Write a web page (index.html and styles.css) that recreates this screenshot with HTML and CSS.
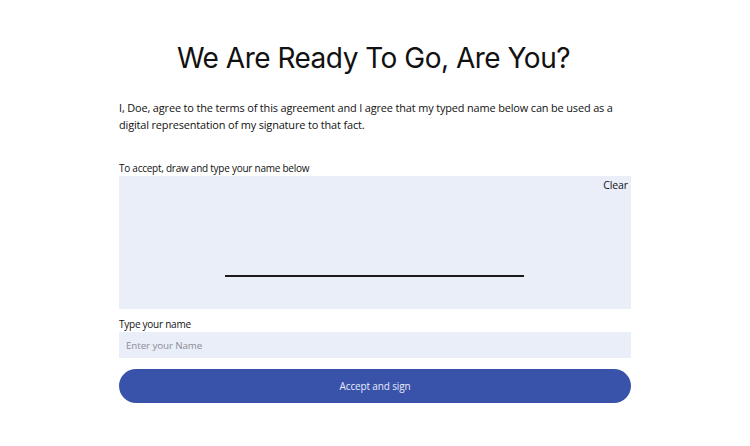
FILE: index.html
```html
<!DOCTYPE html>
<html>
<head>
<meta charset="utf-8">
<link rel="stylesheet" href="styles.css">
</head>
<body>
<main class="wrap">
  <h1 class="title">We Are Ready To Go, Are You?</h1>
  <p class="lead">I, Doe, agree to the terms of this agreement and I agree that my typed name below can be used as a digital representation of my signature to that fact.</p>
  <div class="field sig-field">
    <label class="label">To accept, draw and type your name below</label>
    <div class="sig-pad">
      <div class="clear-row"><span class="clear">Clear</span></div>
      <div class="sig-line"></div>
    </div>
  </div>
  <div class="field name-field">
    <label class="label">Type your name</label>
    <input class="name-input" type="text" placeholder="Enter your Name">
  </div>
  <button class="submit">Accept and sign</button>
</main>
</body>
</html>
```
FILE: styles.css
```css
* { box-sizing: border-box; }
html, body { margin: 0; padding: 0; background: #fff; }
body { font-family: "Open Sans", sans-serif; color: #111; }
.wrap {
  width: 512px;
  margin: 0 auto;
  padding-top: 38px;
  display: flex;
  flex-direction: column;
}
.title {
  margin: 0 0 0 -3px;
  font-family: Inter, "Liberation Sans", sans-serif;
  font-weight: 400;
  font-size: 28px;
  line-height: 40px;
  text-align: center;
  letter-spacing: -0.5px;
  color: #111;
}
.lead {
  margin: 21px 0 0;
  font-size: 10.95px;
  line-height: 17px;
  letter-spacing: -0.15px;
  color: #111;
}
.sig-field { margin-top: 28px; }
.label {
  display: block;
  font-size: 10px;
  line-height: 14px;
  letter-spacing: -0.25px;
  color: #111;
  margin-bottom: 1px;
}
.sig-pad {
  height: 133px;
  background: #eaeef8;
  display: flex;
  flex-direction: column;
  align-items: center;
}
.clear-row {
  align-self: stretch;
  display: flex;
  justify-content: flex-end;
  padding: 1px 3px 0 0;
}
.clear { font-size: 10.5px; line-height: 16px; letter-spacing: -0.1px; color: #111; }
.sig-line {
  width: 299px;
  height: 2px;
  background: #1a1a1a;
  margin-top: 82px;
  margin-left: -1px;
}
.name-field { margin-top: 8px; }
.name-input {
  display: block;
  width: 100%;
  height: 26px;
  border: 0;
  background: #eaeef8;
  padding: 0 7px;
  font-family: "Open Sans", sans-serif;
  font-size: 9.8px;
  letter-spacing: -0.1px;
  color: #111;
  outline: none;
}
.name-input::placeholder { color: #8a8d94; }
.submit {
  margin-top: 11px;
  height: 34px;
  width: 100%;
  border: 0;
  border-radius: 17px;
  background: #3953ab;
  color: #e8ecf8;
  font-family: "Open Sans", sans-serif;
  font-size: 10px;
  letter-spacing: -0.15px;
}
```
